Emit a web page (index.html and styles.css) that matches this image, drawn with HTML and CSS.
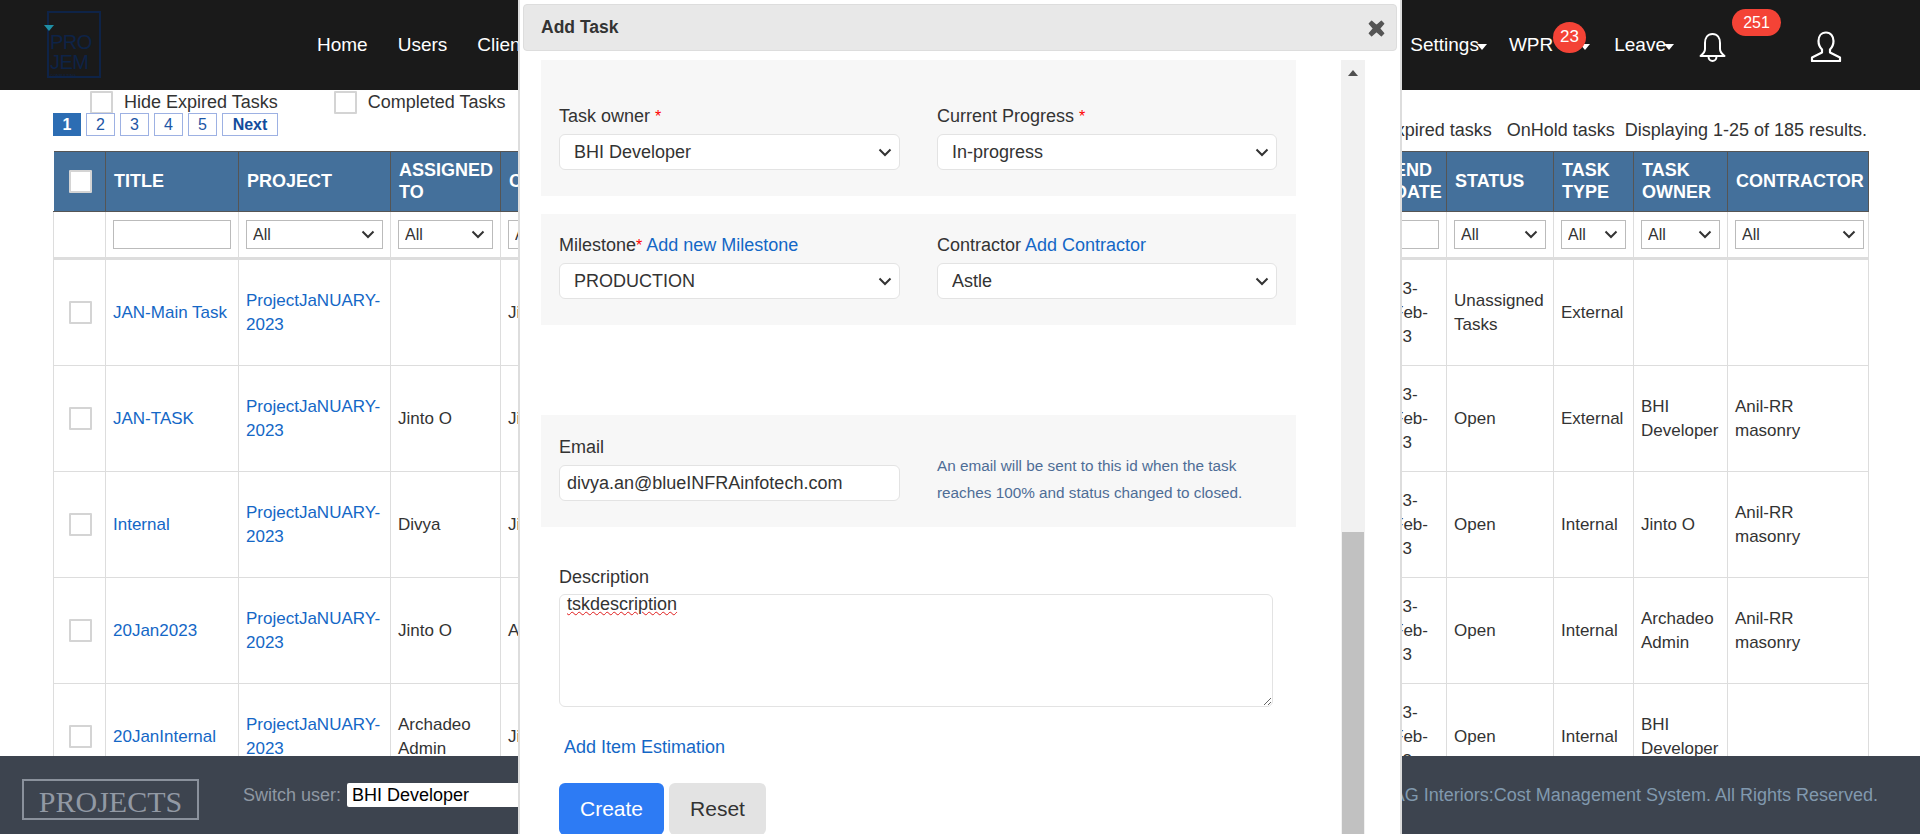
FILE: index.html
```html
<!DOCTYPE html>
<html lang="en">
<head>
<meta charset="utf-8">
<title>Add Task</title>
<link rel="stylesheet" href="styles.css">
</head>
<body>
<div class="app">
  <header class="topbar">
    <div class="logo"><i class="logo-mark"></i><span class="logo-line">PRO</span><span class="logo-line">JEM</span><span class="logo-sub">CONSULTING</span></div>
    <nav class="nav-left"><a>Home</a><a>Users</a><a>Clients</a><a>Projects</a></nav>
    <nav class="nav-right">
      <a class="drop tight">Settings</a>
      <a class="drop wpr">WPR<span class="badge badge-round">23</span></a>
      <a class="drop tight leave">Leave</a>
      <span class="bell">
        <svg width="27" height="31" viewBox="0 0 27 31" fill="none" stroke="#fff" stroke-width="2"><path d="M13.5 2C8.5 2 6 6 6 11v6c0 3-2 5-4.500 7h24c-2.500-2-4.500-4-4.500-7v-6c0-5-2.500-9-7.500-9z" stroke-linejoin="round"/><path d="M9.500 24.500c0 6 8 6 8 0"/></svg>
        <span class="badge badge-pill">251</span>
      </span>
      <span class="user">
        <svg width="32" height="31" viewBox="0 0 32 31" fill="none" stroke="#fff" stroke-width="2.200" stroke-linejoin="round"><path d="M16 1.500c-5 0-7.500 4-7.500 8.500 0 3.500 1.500 6.500 3.500 8.500v3L2 26.500V30h28v-3.500l-10-5v-3c2-2 3.500-5 3.500-8.500C23.500 5.500 21 1.500 16 1.500z"/></svg>
      </span>
    </nav>
  </header>

  <main class="content">
    <div class="toolbar">
      <div class="toolbar-left">
        <div class="filters">
          <label class="filter"><input class="check" type="checkbox">Hide Expired Tasks</label>
          <label class="filter"><input class="check" type="checkbox">Completed Tasks</label>
        </div>
        <div class="pager">
          <a class="page active">1</a><a class="page">2</a><a class="page">3</a><a class="page">4</a><a class="page">5</a><a class="page next">Next</a>
        </div>
      </div>
      <div class="toolbar-right"><span>Expired tasks</span><span>OnHold tasks</span><span>Displaying 1-25 of 185 results.</span></div>
    </div>

    <table class="grid">
      <colgroup>
        <col class="c-check"><col class="c-title"><col class="c-project"><col class="c-assigned"><col class="c-created"><col class="c-start"><col class="c-end"><col class="c-status"><col class="c-type"><col class="c-owner"><col class="c-contractor">
      </colgroup>
      <thead>
        <tr class="head">
          <th class="center"><input class="check check-head" type="checkbox"></th>
          <th>TITLE</th><th>PROJECT</th><th>ASSIGNED TO</th><th>CREATED BY</th><th>START DATE</th><th>END DATE</th><th>STATUS</th><th>TASK TYPE</th><th>TASK OWNER</th><th>CONTRACTOR</th>
        </tr>
        <tr class="search">
          <td></td>
          <td><input class="field" type="text"></td>
          <td><select class="field"><option>All</option></select></td>
          <td><select class="field"><option>All</option></select></td>
          <td><select class="field"><option>All</option></select></td>
          <td><input class="field" type="text"></td>
          <td><input class="field" type="text"></td>
          <td><select class="field"><option>All</option></select></td>
          <td><select class="field"><option>All</option></select></td>
          <td><select class="field"><option>All</option></select></td>
          <td><select class="field"><option>All</option></select></td>
        </tr>
      </thead>
      <tbody>
        <tr class="row-first">
          <td class="center"><input class="check" type="checkbox"></td>
          <td><a class="link">JAN-Main Task</a></td><td><a class="link">ProjectJaNUARY-2023</a></td><td></td><td>Jinto O</td><td>10-Jan-23</td><td>13-Feb-23</td><td>Unassigned Tasks</td><td>External</td><td></td><td></td>
        </tr>
        <tr>
          <td class="center"><input class="check" type="checkbox"></td>
          <td><a class="link">JAN-TASK</a></td><td><a class="link">ProjectJaNUARY-2023</a></td><td>Jinto O</td><td>Jinto O</td><td>10-Jan-23</td><td>13-Feb-23</td><td>Open</td><td>External</td><td>BHI Developer</td><td>Anil-RR masonry</td>
        </tr>
        <tr>
          <td class="center"><input class="check" type="checkbox"></td>
          <td><a class="link">Internal</a></td><td><a class="link">ProjectJaNUARY-2023</a></td><td>Divya</td><td>Jinto O</td><td>10-Jan-23</td><td>13-Feb-23</td><td>Open</td><td>Internal</td><td>Jinto O</td><td>Anil-RR masonry</td>
        </tr>
        <tr>
          <td class="center"><input class="check" type="checkbox"></td>
          <td><a class="link">20Jan2023</a></td><td><a class="link">ProjectJaNUARY-2023</a></td><td>Jinto O</td><td>Archadeo Admin</td><td>20-Jan-23</td><td>13-Feb-23</td><td>Open</td><td>Internal</td><td>Archadeo Admin</td><td>Anil-RR masonry</td>
        </tr>
        <tr>
          <td class="center"><input class="check" type="checkbox"></td>
          <td><a class="link">20JanInternal</a></td><td><a class="link">ProjectJaNUARY-2023</a></td><td>Archadeo Admin</td><td>Jinto O</td><td>20-Jan-23</td><td>13-Feb-23</td><td>Open</td><td>Internal</td><td>BHI Developer</td><td></td>
        </tr>
      </tbody>
    </table>
  </main>

  <footer class="footer">
    <div class="brand">PROJECTS</div>
    <label class="switch">Switch user:<select class="switch-select"><option>BHI Developer</option></select></label>
    <div class="copy">© 2023 AG Interiors:Cost Management System. All Rights Reserved.</div>
  </footer>

  <section class="modal">
    <div class="modal-head">
      <h2 class="modal-title">Add Task</h2>
      <svg class="modal-close" width="17" height="17" viewBox="0 0 14 14"><path d="M3 1l4 3.500L11 1l2 2-3.500 4L13 11l-2 2-4-3.500L3 13l-2-2 3.500-4L1 3z" fill="#555" stroke="#555" stroke-linejoin="round"/></svg>
    </div>
    <div class="modal-body">
      <form class="form">
        <div class="panel panel-first">
          <div class="col"><label class="lbl">Task owner <span class="req">*</span></label><select class="ctl"><option>BHI Developer</option></select></div>
          <div class="col"><label class="lbl">Current Progress <span class="req">*</span></label><select class="ctl"><option>In-progress</option></select></div>
        </div>
        <div class="panel panel-second">
          <div class="col"><label class="lbl">Milestone<span class="req">*</span> <a class="link">Add new Milestone</a></label><select class="ctl"><option>PRODUCTION</option></select></div>
          <div class="col"><label class="lbl">Contractor <a class="link">Add Contractor</a></label><select class="ctl"><option>Astle</option></select></div>
        </div>
        <div class="panel panel-third">
          <div class="col"><label class="lbl">Email</label><input class="ctl ctl-text" type="text" value="divya.an@blueINFRAinfotech.com"></div>
          <p class="help">An email will be sent to this id when the task reaches 100% and status changed to closed.</p>
        </div>
        <div class="desc">
          <label class="lbl">Description</label>
          <textarea class="area" spellcheck="false">tskdescription</textarea>
        </div>
        <a class="link add-item">Add Item Estimation</a>
        <div class="actions">
          <button class="btn btn-primary" type="button">Create</button>
          <button class="btn btn-plain" type="button">Reset</button>
        </div>
      </form>
      <div class="scroll"><i class="scroll-up"></i><div class="scroll-gap"></div><div class="scroll-thumb"></div></div>
    </div>
  </section>
</div>
</body>
</html>
```
FILE: styles.css
```css
* { box-sizing: border-box; }
html, body { margin: 0; height: 100%; overflow: hidden; }
body { font-family: "Liberation Sans", Arial, sans-serif; color: #333; background: #fff; }
a { text-decoration: none; }

.app { position: relative; display: flex; flex-direction: column; height: 100vh; overflow: hidden; }

/* top bar */
.topbar { flex: 0 0 90px; display: flex; align-items: center; background: #1a1a1a; color: #fff; font-size: 19px; padding: 0 78px 1px 47px; }
.logo { flex: 0 0 54px; height: 67px; margin-top: -1px; border: 2px solid #0e2347; color: #0e2347; display: flex; flex-direction: column; position: relative; padding: 19px 0 0 1px; font-size: 20px; line-height: 20px; letter-spacing: -0.5px; }
.logo-mark { position: absolute; left: -5px; top: 12px; border-left: 5px solid transparent; border-right: 5px solid transparent; border-top: 6px solid #1f8fa5; }
.logo-sub { font-size: 4px; line-height: 6px; margin-top: 1px; letter-spacing: 0; }
.nav-left { display: flex; gap: 30px; margin-left: 216px; }
.nav-right { display: flex; align-items: center; margin-left: auto; gap: 22px; position: relative; }
.drop { position: relative; display: flex; align-items: center; }
.drop::after { content: ""; border-left: 5.500px solid transparent; border-right: 5.500px solid transparent; border-top: 6px solid #fff; margin-top: 4px; }
.tight::after { margin-left: -2px; }
.wpr::after { margin-left: 27px; }
.leave { margin-left: 2px; }
.badge { position: absolute; background: #f44336; color: #fff; font-size: 16px; display: flex; align-items: center; justify-content: center; }
.badge-round { left: 44px; top: -12px; width: 33px; height: 31px; border-radius: 50%; font-size: 17px; }
.badge-pill { left: 33px; top: -23px; width: 49px; height: 27px; border-radius: 14px; }
.bell { position: relative; display: flex; margin-left: 3px; margin-top: 6px; }
.user { display: flex; margin-left: 62px; margin-top: 4px; }

/* main */
.content { flex: 1 1 auto; min-height: 0; overflow: hidden; padding-left: 53px; }
.toolbar { width: 1815px; height: 61px; display: flex; justify-content: space-between; }
.toolbar-left { display: flex; flex-direction: column; }
.filters { display: flex; height: 23px; padding: 1px 0 0 37px; font-size: 18px; line-height: 24px; gap: 56px; color: #333; }
.filter { display: flex; align-items: center; }
.check { appearance: none; -webkit-appearance: none; display: block; width: 23px; height: 23px; margin: 0 11px 0 0; background: #fff; border: 2px solid #d4d4d4; border-radius: 1px; flex: none; }
.pager { display: flex; gap: 5px; }
.page { width: 29px; height: 23px; border: 1px solid #9db1e3; color: #1d56a5; font-size: 16px; line-height: 21px; text-align: center; }
.page.active { width: 28px; background: #2c6db3; border-color: #2c6db3; color: #fff; font-weight: bold; }
.page.next { width: 56px; font-weight: bold; color: #124c9c; }
.toolbar-right { display: flex; gap: 15px; font-size: 18px; padding-top: 29px; line-height: 22px; margin-right: 1px; }
.toolbar-right span:last-child { margin-left: -5px; }

/* table */
.grid { width: 1815px; table-layout: fixed; border-collapse: collapse; font-size: 17px; line-height: 24px; }
.c-check { width: 52px; } .c-title { width: 133px; } .c-project { width: 152px; } .c-assigned { width: 110px; }
.c-created { width: 420px; } .c-start { width: 465px; } .c-end { width: 61px; }
.c-status { width: 107px; } .c-type { width: 80px; } .c-owner { width: 94px; } .c-contractor { width: 141px; }
.grid th { background: #44709b; color: #fff; font-size: 18px; line-height: 22px; text-align: left; padding: 0 8px 2px; border: 1px solid #555; border-left: 0; height: 60px; }
.grid th.center, .grid td.center { text-align: center; padding: 0 0 0 2px; }
.check-head { margin: 0 auto; }
.grid td { border: 1px solid #ddd; border-top: 0; padding: 0 7px; height: 106px; vertical-align: middle; }
.grid td .check { margin: 0 auto; }
.grid .search td { height: 47px; border-bottom: 3px solid #ddd; padding: 0 7px 1px; }
.grid .search td:last-child { padding-right: 4px; }
.grid .row-first td { height: 107px; }
.field { display: block; width: 100%; height: 29px; border: 1px solid #bbb; background: #fff; font: 16px "Liberation Sans", Arial, sans-serif; color: #333; padding: 0 6px; margin: 0; }
select.field, select.ctl { appearance: none; -webkit-appearance: none; background-image: url("data:image/svg+xml,%3Csvg xmlns='http://www.w3.org/2000/svg' width='14' height='9'%3E%3Cpath d='M1.500 1.500L7 7l5.500-5.500' fill='none' stroke='%23333' stroke-width='2'/%3E%3C/svg%3E"); background-repeat: no-repeat; background-position: right 7px center; }
.link { color: #1467c6; }

/* footer */
.footer { flex: 0 0 78px; display: flex; align-items: flex-start; background: #3d444f; color: #929aa5; font-size: 18px; padding: 23px 42px 0 22px; }
.brand { width: 177px; height: 41px; border: 2px solid #8a919c; font: 30px/41px "Liberation Serif", "Times New Roman", serif; color: #9299a4; text-align: center; }
.switch { display: flex; align-items: center; margin: 4px 0 0 44px; height: 24px; white-space: nowrap; color: #8f98a3; }
.switch-select { margin-left: 6px; width: 200px; height: 24px; border: 0; border-radius: 2px; background: #fff; color: #000; font: 18px "Liberation Sans", Arial, sans-serif; padding: 0 0 0 1px; }
.copy { margin: 4px 0 0 auto; height: 24px; line-height: 24px; color: #8199ae; }

/* modal */
.modal { position: absolute; left: 518px; top: 0; bottom: 0; width: 884px; background: #fff; border-left: 2px solid #ddd; border-right: 2px solid #ddd; display: flex; flex-direction: column; color: #333; z-index: 5; }
.modal-head { flex: 0 0 47px; margin: 4px 3px 0; display: flex; align-items: center; justify-content: space-between; background: #e8e8e8; border: 1px solid #ddd; border-radius: 4px; padding: 0 11px 0 17px; }
.modal-title { margin: 0; font-size: 17.500px; font-weight: bold; color: #333; }
.modal-close { margin-top: 1px; }
.modal-body { flex: 1 1 auto; min-height: 0; display: flex; padding: 9px 35px 0 21px; overflow: hidden; }
.form { flex: 0 0 755px; display: flex; flex-direction: column; font-size: 18px; }
.panel { background: #f7f7f7; display: grid; grid-template-columns: 341px 340px; column-gap: 37px; padding: 19px 19px 26px 18px; }
.panel-first { padding-top: 44px; }
.panel-second { margin-top: 18px; }
.panel-third { margin-top: 90px; padding-top: 20px; }
.lbl { display: block; line-height: 24px; margin-bottom: 6px; color: #333; white-space: nowrap; }
.req { color: #f00; font-size: 16px; line-height: 1; }
.ctl { display: block; width: 100%; height: 36px; border: 1px solid #e3e3e3; border-radius: 6px; background-color: #fff; font: 18px "Liberation Sans", Arial, sans-serif; color: #333; padding: 0 14px; margin: 0; }
.ctl-text { padding: 0 7px; }
.help { margin: 0 0 -6px; padding-top: 17px; font-size: 15.300px; line-height: 27px; color: #4e6d96; }
.desc { padding: 38px 0 0 18px; }
.desc .lbl { margin-bottom: 5px; }
.area { display: block; width: 714px; height: 113px; border: 1px solid #e3e3e3; border-radius: 6px; font: 18px/18px "Liberation Sans", Arial, sans-serif; color: #333; padding: 0 7px; margin: 0; text-decoration: underline wavy #e01b1b 1px; }
.add-item { margin: 28px 0 0 23px; line-height: 24px; }
.actions { display: flex; gap: 5px; margin: 24px 0 0 18px; }
.btn { height: 52px; border: 0; border-radius: 6px; font: 21px "Liberation Sans", Arial, sans-serif; padding: 0; flex: none; }
.btn-primary { width: 105px; background: #2d7bf4; color: #fff; }
.btn-plain { width: 97px; background: #e3e3e3; color: #333; }
.scroll { flex: 0 0 24px; margin-left: auto; background: #f1f1f1; display: flex; flex-direction: column; align-items: center; padding: 0 1px; }
.scroll-up { flex: none; margin-top: 10px; border-left: 5.500px solid transparent; border-right: 5.500px solid transparent; border-bottom: 6px solid #505050; }
.scroll-gap { flex: 1 1 auto; }
.scroll-thumb { flex: 0 0 302px; width: 100%; background: #c1c1c1; }
```
